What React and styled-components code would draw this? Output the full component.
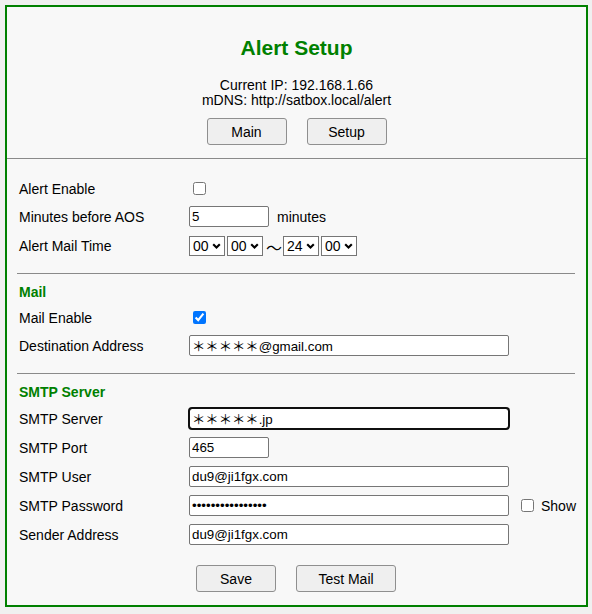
import React from "react";
import styled, { createGlobalStyle } from "styled-components";

const GlobalStyle = createGlobalStyle`
  body {
    margin: 5px 4px 5px 5px;
    background: #f0f0f0;
    font-family: "Liberation Sans", Arial, sans-serif;
    color: #000;
  }
`;

const Chevron = () => (
  <ChevronIcon viewBox="0 0 9 6" aria-hidden="true">
    <path d="M1.2 1.2 L4.5 4.5 L7.8 1.2" fill="none" stroke="#000" strokeWidth="2.1" />
  </ChevronIcon>
);

const TimePicker = ({ value, options }) => (
  <SelectBox>
    <TimeSelect defaultValue={value}>
      {options.map((o) => (
        <option key={o}>{o}</option>
      ))}
    </TimeSelect>
    <Chevron />
  </SelectBox>
);

const App = () => {
  return (
    <>
      <GlobalStyle />
      <Frame>
        <Header>
          <Title>Alert Setup</Title>
          <Info>
            <div>Current IP: 192.168.1.66</div>
            <div>mDNS: http://satbox.local/alert</div>
          </Info>
          <Actions>
            <Button $width={80}>Main</Button>
            <Button $width={80}>Setup</Button>
          </Actions>
        </Header>

        <Body>
          <Row $compact>
            <Label>Alert Enable</Label>
            <Check type="checkbox" />
          </Row>
          <Row>
            <Label>Minutes before AOS</Label>
            <TextInput $width={80} defaultValue="5" />
            <Unit>minutes</Unit>
          </Row>
          <Row>
            <Label>Alert Mail Time</Label>
            <TimePicker value="00" options={["00", "12"]} />
            <TimePicker value="00" options={["00", "30"]} />
            <Tilde>〜</Tilde>
            <TimePicker value="24" options={["12", "24"]} />
            <TimePicker value="00" options={["00", "30"]} />
          </Row>

          <Rule />
          <SectionTitle>Mail</SectionTitle>
          <Row $compact>
            <Label>Mail Enable</Label>
            <Check type="checkbox" defaultChecked />
          </Row>
          <Row>
            <Label>Destination Address</Label>
            <TextInput $width={320} defaultValue="＊＊＊＊＊@gmail.com" />
          </Row>

          <Rule />
          <SectionTitle>SMTP Server</SectionTitle>
          <Row>
            <Label>SMTP Server</Label>
            <TextInput $width={320} $focused defaultValue="＊＊＊＊＊.jp" />
          </Row>
          <Row>
            <Label>SMTP Port</Label>
            <TextInput $width={80} defaultValue="465" />
          </Row>
          <Row>
            <Label>SMTP User</Label>
            <TextInput $width={320} defaultValue="du9@ji1fgx.com" />
          </Row>
          <Row>
            <Label>SMTP Password</Label>
            <TextInput
              $width={320}
              type="password"
              defaultValue="passwordpassword"
            />
            <ShowToggle>
              <Check type="checkbox" />
              Show
            </ShowToggle>
          </Row>
          <Row>
            <Label>Sender Address</Label>
            <TextInput $width={320} defaultValue="du9@ji1fgx.com" />
          </Row>

          <Actions $top={16}>
            <Button $width={80}>Save</Button>
            <Button $width={100}>Test Mail</Button>
          </Actions>
        </Body>
      </Frame>
    </>
  );
};

export default App;

const Frame = styled.div`
  border: 2px solid #008000;
  background: #f8f8f8;
`;

const Header = styled.header`
  padding: 29px 0 13px;
  text-align: center;
`;

const Title = styled.h1`
  margin: 0 0 18px;
  font-size: 21px;
  line-height: 24px;
  font-weight: 700;
  color: #008000;
`;

const Info = styled.div`
  font-size: 14px;
  line-height: 15px;
`;

const Actions = styled.div`
  margin-top: ${(props) => props.$top || 10}px;
  display: flex;
  justify-content: center;
  gap: 20px;
`;

const Button = styled.button`
  width: ${(props) => props.$width}px;
  height: 27px;
  padding: 0;
  border: 1px solid #8f8f8f;
  border-radius: 3px;
  background: #efefef;
  color: #000;
  font-family: "Liberation Sans", Arial, sans-serif;
  font-size: 14px;
`;

const Body = styled.main`
  padding: 16px 11px 13px 10px;
  border-top: 1px solid #8a8a8a;
`;

const Row = styled.div`
  height: ${(props) => (props.$compact ? 27 : 29)}px;
  display: flex;
  align-items: center;
`;

const Label = styled.span`
  width: 172px;
  flex-shrink: 0;
  padding-left: 2px;
  box-sizing: border-box;
  font-size: 14px;
`;

const TextInput = styled.input`
  width: ${(props) => props.$width}px;
  height: 21px;
  flex-shrink: 0;
  box-sizing: border-box;
  margin: 0;
  padding: 1px 2px;
  border: 1px solid #767676;
  border-radius: 2px;
  background: #fff;
  color: #000;
  font-family: "Liberation Sans", Arial, "Noto Sans CJK JP", sans-serif;
  font-size: 13.333px;
  outline: ${(props) => (props.$focused ? "2px solid #101010" : "none")};
  outline-offset: -1px;
  ${(props) => props.$focused && "border-radius: 3px;"}
`;

const Unit = styled.span`
  margin-left: 8px;
  font-size: 14px;
`;

const Check = styled.input`
  width: 13px;
  height: 13px;
  margin: 3px 3px 3px 4px;
`;

const SelectBox = styled.span`
  position: relative;
  display: inline-flex;
  margin-right: 2px;
`;

const TimeSelect = styled.select`
  appearance: none;
  width: 36px;
  height: 20px;
  margin: 0;
  padding: 0 0 0 3px;
  border: 1px solid #767676;
  border-radius: 0;
  background: #fff;
  color: #000;
  font-family: "Liberation Sans", Arial, sans-serif;
  font-size: 14px;
`;

const ChevronIcon = styled.svg`
  position: absolute;
  right: 4px;
  top: 7px;
  width: 9px;
  height: 6px;
  pointer-events: none;
`;

const Tilde = styled.span`
  margin: 3px 1px 0 1px;
  font-family: "Noto Sans CJK JP", sans-serif;
  font-size: 16px;
  line-height: 16px;
  color: #000;
`;

const ShowToggle = styled.label`
  margin-left: 8px;
  flex-shrink: 0;
  display: flex;
  align-items: center;
  gap: 4px;
  font-size: 14px;
`;

const Rule = styled.hr`
  margin: 13px 0 0;
  border: 0;
  border-top: 1px solid #8a8a8a;
`;

const SectionTitle = styled.h2`
  margin: 10px 0 4px;
  padding-left: 2px;
  font-size: 14px;
  line-height: 16px;
  font-weight: 700;
  color: #008000;
`;
